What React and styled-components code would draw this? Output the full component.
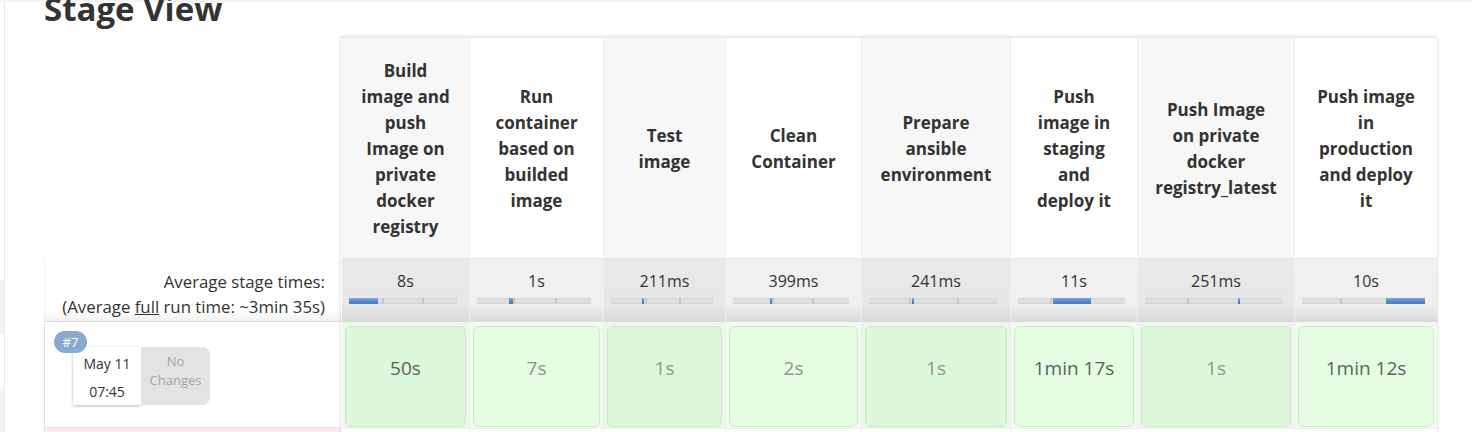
import React from "react";
import styled, { createGlobalStyle } from "styled-components";

const GlobalStyle = createGlobalStyle`
  html, body {
    margin: 0;
    padding: 0;
    overflow: hidden;
    background: #ffffff;
  }
  body {
    font-family: "Open Sans", "Noto Sans", "Liberation Sans", sans-serif;
    color: #333333;
  }
`;

const Page = styled.div`
  display: flex;
  flex-direction: column;
  height: 432px;
`;

const TopStrip = styled.div`
  height: 2px;
  background: #f4f4f4;
  flex: none;
`;

const Body = styled.div`
  display: flex;
  flex: 1;
`;

const Sidebar = styled.div`
  width: 4px;
  border-right: 1px solid #e9e9e9;
  display: flex;
  flex-direction: column;
  padding-top: 278px;
  gap: 54px;
`;

const SideBlock = styled.div`
  height: 54px;
  background: #f3f3f3;
`;

const Main = styled.main`
  padding-left: 39px;
  display: flex;
  flex-direction: column;
`;

const Title = styled.h2`
  margin: -9px 0 13px;
  font-size: 33px;
  line-height: 32px;
  font-weight: 700;
  color: #333333;
`;

const Table = styled.div`
  display: flex;
  align-items: flex-start;
`;

const LeftColumn = styled.div`
  width: 297px;
  display: flex;
  flex-direction: column;
`;

const HeaderSpacer = styled.div`
  height: 220px;
`;

const AvgLabel = styled.div`
  height: 64px;
  box-sizing: border-box;
  padding: 11px 16px 0 0;
  text-align: right;
  font-size: 16.8px;
  line-height: 25px;
  border-left: 1px solid #f2f2f2;
  border-bottom: 1px solid #dcdcdc;
  background: linear-gradient(to bottom, #ffffff 82%, #f1f1f1 100%);

  u {
    text-decoration: underline;
  }
`;

const BuildCell = styled.div`
  position: relative;
  height: 106px;
  box-sizing: border-box;
  border-left: 1px solid #e3e3e3;
  border-bottom: 1px solid #e3e3e3;
  padding: 25px 0 0 28px;
  display: flex;
  align-items: flex-start;
`;

const BuildBadge = styled.span`
  position: absolute;
  left: 9px;
  top: 9px;
  width: 33px;
  height: 22px;
  border-radius: 11px;
  background: #89a9ce;
  color: #ffffff;
  font-size: 13px;
  line-height: 22px;
  text-align: center;
  z-index: 1;
`;

const DateBox = styled.div`
  width: 68px;
  height: 58px;
  box-sizing: border-box;
  padding-top: 3px;
  background: #ffffff;
  box-shadow: 0 1px 3px rgba(0, 0, 0, 0.28);
  text-align: center;
  font-size: 14px;
  line-height: 28px;
  color: #333333;
`;

const ChangesBox = styled.div`
  width: 69px;
  height: 58px;
  box-sizing: border-box;
  padding-top: 5px;
  background: #e3e3e3;
  border-radius: 0 8px 8px 0;
  text-align: center;
  font-size: 13px;
  line-height: 19px;
  color: #a3a3a3;
`;

const NextRowLeft = styled.div`
  height: 60px;
  background: #fdeaea;
  border-left: 1px solid #e3e3e3;
`;

const StageArea = styled.div`
  display: flex;
  box-shadow: 0 0 3px rgba(0, 0, 0, 0.22);
  border-top: 1px solid #ececec;
  margin-top: -1px;
`;

const StageColumn = styled.div`
  display: flex;
  flex-direction: column;
  box-sizing: border-box;
  border-left: 1px solid ${(p) => (p.$first ? "transparent" : "#efefef")};
`;

const StageHeader = styled.div`
  height: 220px;
  display: flex;
  align-items: center;
  justify-content: center;
  text-align: center;
  padding-top: 2px;
  box-sizing: border-box;
  background: ${(p) => (p.$shade ? "#f7f7f7" : "#ffffff")};
  font-size: 17px;
  font-weight: 700;
  line-height: 26px;
  color: #333333;
`;

const HeaderLines = styled.div`
  display: flex;
  flex-direction: column;
  align-items: center;

  span {
    white-space: nowrap;
  }
`;

const AvgCell = styled.div`
  height: 64px;
  box-sizing: border-box;
  padding-top: 12px;
  background: linear-gradient(
    to bottom,
    ${(p) => (p.$shade ? "#e9e9e9" : "#f1f1f1")} 0%,
    ${(p) => (p.$shade ? "#e7e7e7" : "#efefef")} 72%,
    #d9d9d9 100%
  );
  border-top: 1px solid #e2e2e2;
  text-align: center;
`;

const AvgTime = styled.div`
  font-size: 16px;
  line-height: 20px;
  color: #333333;
`;

const Bar = styled.div`
  position: relative;
  height: 6px;
  margin: 7px 12px 0 7px;
  background: linear-gradient(to bottom, #d6d6d6 0%, #e2e2e2 50%, #d4d4d4 100%);
`;

const BarTick = styled.span`
  position: absolute;
  top: 0;
  bottom: 0;
  width: 2px;
  background: #c6c6c6;
`;

const BarFill = styled.span`
  position: absolute;
  top: 0;
  bottom: 0;
  min-width: 2px;
  background: linear-gradient(to bottom, #7ea6e4 0%, #5685d2 60%, #4a78c4 100%);
`;

const DurationCell = styled.div`
  height: 106px;
  box-sizing: border-box;
  padding: 4px 3px 1px 3px;
  background: ${(p) => (p.$shade ? "#eaf8e8" : "#f0fcef")};
`;

const DurationBox = styled.div`
  height: 100%;
  box-sizing: border-box;
  border: 1px solid #d3e3d1;
  border-radius: 6px;
  background: ${(p) => (p.$shade ? "#ddf7da" : "#e5fee2")};
  display: flex;
  align-items: center;
  justify-content: center;
  padding-bottom: 17px;
  font-size: 19px;
  color: ${(p) => (p.$strong ? "#5e5e5e" : "#929292")};
`;

const NextRowCell = styled.div`
  height: 60px;
  background: #ffffff;
  border-top: 1px solid #eeeeee;
`;

const stages = [
  {
    w: 128,
    lines: ["Build", "image and", "push", "Image on", "private", "docker", "registry"],
    avg: "8s",
    fill: [0, 27],
    ticks: [31, 68],
    dur: "50s",
    strong: true,
  },
  {
    w: 134,
    lines: ["Run", "container", "based on", "builded", "image"],
    avg: "1s",
    fill: [28.5, 3],
    ticks: [32, 68],
    dur: "7s",
  },
  {
    w: 122,
    lines: ["Test", "image"],
    avg: "211ms",
    fill: [30, 1],
    ticks: [33, 67],
    dur: "1s",
  },
  {
    w: 136,
    lines: ["Clean", "Container"],
    avg: "399ms",
    fill: [32, 1.5],
    ticks: [34, 68],
    dur: "2s",
  },
  {
    w: 149,
    lines: ["Prepare", "ansible", "environment"],
    avg: "241ms",
    fill: [33, 1],
    ticks: [31, 68],
    dur: "1s",
  },
  {
    w: 127,
    lines: ["Push", "image in", "staging", "and", "deploy it"],
    avg: "11s",
    fill: [33, 35],
    ticks: [30],
    dur: "1min 17s",
    strong: true,
  },
  {
    w: 157,
    lines: ["Push Image", "on private", "docker", "registry_latest"],
    avg: "251ms",
    fill: [68, 0.8],
    ticks: [31],
    dur: "1s",
  },
  {
    w: 143,
    lines: ["Push image", "in", "production", "and deploy", "it"],
    avg: "10s",
    fill: [68, 32],
    ticks: [31],
    dur: "1min 12s",
    strong: true,
  },
];

export default function App() {
  return (
    <>
      <GlobalStyle />
      <Page>
        <TopStrip />
        <Body>
          <Sidebar>
            <SideBlock />
            <SideBlock />
          </Sidebar>
          <Main>
            <Title>Stage View</Title>
            <Table>
              <LeftColumn>
                <HeaderSpacer />
                <AvgLabel>
                  Average stage times:
                  <br />
                  (Average <u>full</u> run time: ~3min 35s)
                </AvgLabel>
                <BuildCell>
                  <BuildBadge>#7</BuildBadge>
                  <DateBox>
                    <div>May 11</div>
                    <div>07:45</div>
                  </DateBox>
                  <ChangesBox>
                    <div>No</div>
                    <div>Changes</div>
                  </ChangesBox>
                </BuildCell>
                <NextRowLeft />
              </LeftColumn>
              <StageArea>
                {stages.map((s, i) => {
                  const shade = i % 2 === 0;
                  return (
                    <StageColumn key={i} $first={i === 0} style={{ width: s.w }}>
                      <StageHeader $shade={shade}>
                        <HeaderLines>
                          {s.lines.map((l, j) => (
                            <span key={j}>{l}</span>
                          ))}
                        </HeaderLines>
                      </StageHeader>
                      <AvgCell $shade={shade}>
                        <AvgTime>{s.avg}</AvgTime>
                        <Bar>
                          {s.ticks.map((t, k) => (
                            <BarTick key={k} style={{ left: `${t}%` }} />
                          ))}
                          <BarFill style={{ left: `${s.fill[0]}%`, width: `${s.fill[1]}%` }} />
                        </Bar>
                      </AvgCell>
                      <DurationCell $shade={shade}>
                        <DurationBox $shade={shade} $strong={s.strong}>
                          {s.dur}
                        </DurationBox>
                      </DurationCell>
                      <NextRowCell />
                    </StageColumn>
                  );
                })}
              </StageArea>
            </Table>
          </Main>
        </Body>
      </Page>
    </>
  );
}
